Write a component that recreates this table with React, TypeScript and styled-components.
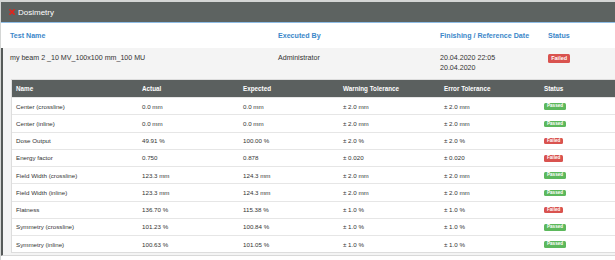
import styled, { createGlobalStyle } from 'styled-components'

const GlobalStyle = createGlobalStyle`
    body {
        margin: 0;
        background: #ffffff;
        font-family: "Liberation Sans", Arial, sans-serif;
        color: #333333;
    }
`

type Status = 'Passed' | 'Failed'

type Measure = {
    name: string
    actual: string
    expected: string
    warning: string
    error: string
    status: Status
}

const measures: Array<Measure> = [
    { name: 'Center (crossline)', actual: '0.0 mm', expected: '0.0 mm', warning: '± 2.0 mm', error: '± 2.0 mm', status: 'Passed' },
    { name: 'Center (inline)', actual: '0.0 mm', expected: '0.0 mm', warning: '± 2.0 mm', error: '± 2.0 mm', status: 'Passed' },
    { name: 'Dose Output', actual: '49.91 %', expected: '100.00 %', warning: '± 2.0 %', error: '± 2.0 %', status: 'Failed' },
    { name: 'Energy factor', actual: '0.750', expected: '0.878', warning: '± 0.020', error: '± 0.020', status: 'Failed' },
    { name: 'Field Width (crossline)', actual: '123.3 mm', expected: '124.3 mm', warning: '± 2.0 mm', error: '± 2.0 mm', status: 'Passed' },
    { name: 'Field Width (inline)', actual: '123.3 mm', expected: '124.3 mm', warning: '± 2.0 mm', error: '± 2.0 mm', status: 'Passed' },
    { name: 'Flatness', actual: '136.70 %', expected: '115.38 %', warning: '± 1.0 %', error: '± 1.0 %', status: 'Failed' },
    { name: 'Symmetry (crossline)', actual: '101.23 %', expected: '100.84 %', warning: '± 1.0 %', error: '± 1.0 %', status: 'Passed' },
    { name: 'Symmetry (inline)', actual: '100.63 %', expected: '101.05 %', warning: '± 1.0 %', error: '± 1.0 %', status: 'Passed' },
]

const Panel = styled.div`
    width: 615px;
    height: 260px;
    overflow: hidden;
    border-top: 2px solid #d4d6d5;
    border-left: 1px solid #d4d6d5;
    box-sizing: border-box;
`

const PanelHeader = styled.div`
    height: 20px;
    padding-left: 8px;
    background: #5d6361;
    border-bottom: 1px solid #8fbde6;

    display: flex;
    align-items: center;
    gap: 3px;

    color: #ffffff;
    font-size: 8px;
`

const CloseMark = styled.svg`
    width: 6px;
    height: 6px;
    flex: none;
`

const TestGrid = styled.div`
    display: grid;
    grid-template-columns: 268px 162px 108px 1fr;
    padding-left: 9px;
    font-size: 7.1px;
`

const TestHeaderRow = styled(TestGrid)`
    height: 25px;
    align-items: center;
    color: #3b87c9;
    font-weight: bold;
`

const TestDataRow = styled.div`
    background: #f4f4f4;
    border-left: 3px solid #565a59;
    margin-left: -1px;
    padding-bottom: 2px;
    border-bottom: 1px solid #d9d9d9;
`

const TestDataCells = styled(TestGrid)`
    padding-left: 7px;
    padding-top: 5px;
    height: 26px;
    line-height: 10px;
`

const Badge = styled.span<{ $status: Status; $small?: boolean }>`
    display: inline-block;
    background: ${p => (p.$status === 'Passed' ? '#5cb85c' : '#d9534f')};
    color: #ffffff;
    font-weight: bold;
    border-radius: 1.5px;
    font-size: ${p => (p.$small ? '4.6px' : '5.5px')};
    height: ${p => (p.$small ? '6.5px' : '9px')};
    line-height: ${p => (p.$small ? '6.5px' : '9px')};
    padding: ${p => (p.$small ? '0 3px' : '0 3.2px')};
    vertical-align: middle;
`

const StatusCell = styled.div`
    padding-top: 1px;
    line-height: 9px;
`

const InnerTable = styled.div`
    margin-left: 8px;
    border: 1px solid #dddddd;
    border-right: none;
    background: #ffffff;
`

const InnerGrid = styled.div`
    display: grid;
    grid-template-columns: 126px 101px 100px 101px 100px 1fr;
    align-items: center;
    font-size: 6.2px;
`

const InnerHeader = styled(InnerGrid)`
    height: 17px;
    background: #5b605f;
    color: #ffffff;
    font-weight: bold;
    font-size: 6.3px;
`

const InnerRow = styled(InnerGrid)`
    height: 16.25px;
    border-top: 1px solid #e6e6e6;
`

const Cell = styled.div`
    padding-left: 4px;
    white-space: nowrap;
`

const App = () => {
    return (
        <>
            <GlobalStyle />
            <Panel>
                <PanelHeader>
                    <CloseMark viewBox="0 0 10 10">
                        <path d="M1.5 1.5 L8.5 8.5 M8.5 1.5 L1.5 8.5" stroke="#e3231b" strokeWidth="2.6" strokeLinecap="square" />
                    </CloseMark>
                    <span>Dosimetry</span>
                </PanelHeader>

                <TestHeaderRow>
                    <div>Test Name</div>
                    <div>Executed By</div>
                    <div>Finishing / Reference Date</div>
                    <div>Status</div>
                </TestHeaderRow>

                <TestDataRow>
                    <TestDataCells>
                        <div>my beam 2 _10 MV_100x100 mm_100 MU</div>
                        <div>Administrator</div>
                        <div>
                            20.04.2020 22:05
                            <br />
                            20.04.2020
                        </div>
                        <StatusCell>
                            <Badge $status="Failed">Failed</Badge>
                        </StatusCell>
                    </TestDataCells>

                    <InnerTable>
                        <InnerHeader>
                            <Cell>Name</Cell>
                            <Cell>Actual</Cell>
                            <Cell>Expected</Cell>
                            <Cell>Warning Tolerance</Cell>
                            <Cell>Error Tolerance</Cell>
                            <Cell>Status</Cell>
                        </InnerHeader>
                        { measures.map((m, i) => (
                            <InnerRow key={i}>
                                <Cell>{ m.name }</Cell>
                                <Cell>{ m.actual }</Cell>
                                <Cell>{ m.expected }</Cell>
                                <Cell>{ m.warning }</Cell>
                                <Cell>{ m.error }</Cell>
                                <Cell>
                                    <Badge $status={ m.status } $small>{ m.status }</Badge>
                                </Cell>
                            </InnerRow>
                        )) }
                    </InnerTable>
                </TestDataRow>
            </Panel>
        </>
    )
}

export default App
